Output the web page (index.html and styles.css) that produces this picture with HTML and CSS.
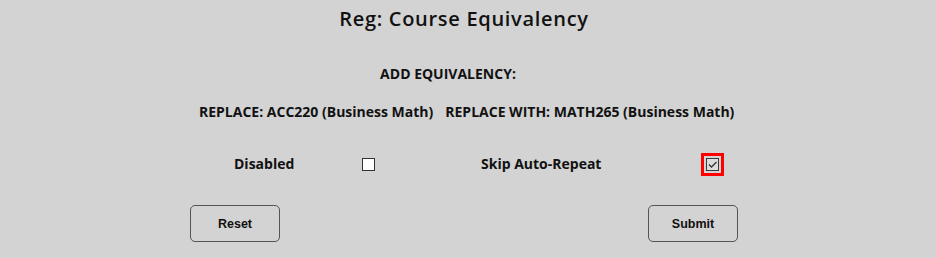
FILE: index.html
```html
<!DOCTYPE html>
<html>
<head>
<meta charset="utf-8">
<link rel="stylesheet" href="styles.css">
</head>
<body>
<div class="page">
  <h1 class="title">Reg: Course Equivalency</h1>
  <div class="subtitle">ADD EQUIVALENCY:</div>
  <div class="replace-row">
    <span>REPLACE: ACC220 (Business Math)</span>
    <span>REPLACE WITH: MATH265 (Business Math)</span>
  </div>
  <div class="options">
    <span class="opt-label first">Disabled</span>
    <span class="box"></span>
    <span class="opt-label second">Skip Auto-Repeat</span>
    <span class="box checked highlighted">
      <svg width="11" height="11" viewBox="0 0 11 11"><path d="M2 5.5 L4.5 8 L9.5 3" fill="none" stroke="#333" stroke-width="1.3"/></svg>
    </span>
  </div>
  <div class="actions">
    <button class="btn">Reset</button>
    <button class="btn">Submit</button>
  </div>
</div>
</body>
</html>
```
FILE: styles.css
```css
html, body {
  margin: 0;
  padding: 0;
  background: #d3d3d3;
}
body {
  font-family: "Open Sans", Lato, sans-serif;
  color: #111;
}
.page {
  width: 548px;
  margin-left: 190px;
  display: flex;
  flex-direction: column;
}
.title {
  margin: 0;
  padding-top: 6px;
  height: 31px;
  font-size: 20px;
  font-weight: 600;
  letter-spacing: 0.7px;
  line-height: 26px;
  text-align: center;
}
.subtitle {
  margin-top: 28px;
  font-size: 14px;
  font-weight: 700;
  line-height: 18px;
  text-align: center;
  padding-right: 32px;
}
.replace-row {
  margin-top: 20px;
  margin-left: 9px;
  display: flex;
  gap: 12px;
  font-size: 14px;
  font-weight: 700;
  line-height: 18px;
}
.options {
  margin-top: 31px;
  display: grid;
  grid-template-columns: 172px 13px 106px 219px 24px;
  align-items: center;
  height: 24px;
  font-size: 14px;
  font-weight: 700;
  line-height: 18px;
}
.opt-label.first {
  padding-left: 44px;
}
.opt-label.second {
  grid-column: 4;
}
.box {
  box-sizing: border-box;
  width: 13px;
  height: 13px;
  border: 1px solid #333;
  background: #fff;
  display: flex;
  align-items: center;
  justify-content: center;
}
.box.checked {
  grid-column: 5;
  justify-self: center;
  background: #dcdcdc;
  border-color: #3a3a3a;
}
.box.highlighted {
  outline: 3px solid #ff0000;
  outline-offset: 2px;
}
.actions {
  margin-top: 29px;
  display: flex;
  justify-content: space-between;
}
.btn {
  box-sizing: border-box;
  width: 90px;
  height: 37px;
  border: 1px solid #555;
  border-radius: 5px;
  background: #d3d3d3;
  font-family: "Liberation Sans", Arial, sans-serif;
  font-weight: 700;
  font-size: 12.5px;
  color: #111;
  padding: 0;
}
```
